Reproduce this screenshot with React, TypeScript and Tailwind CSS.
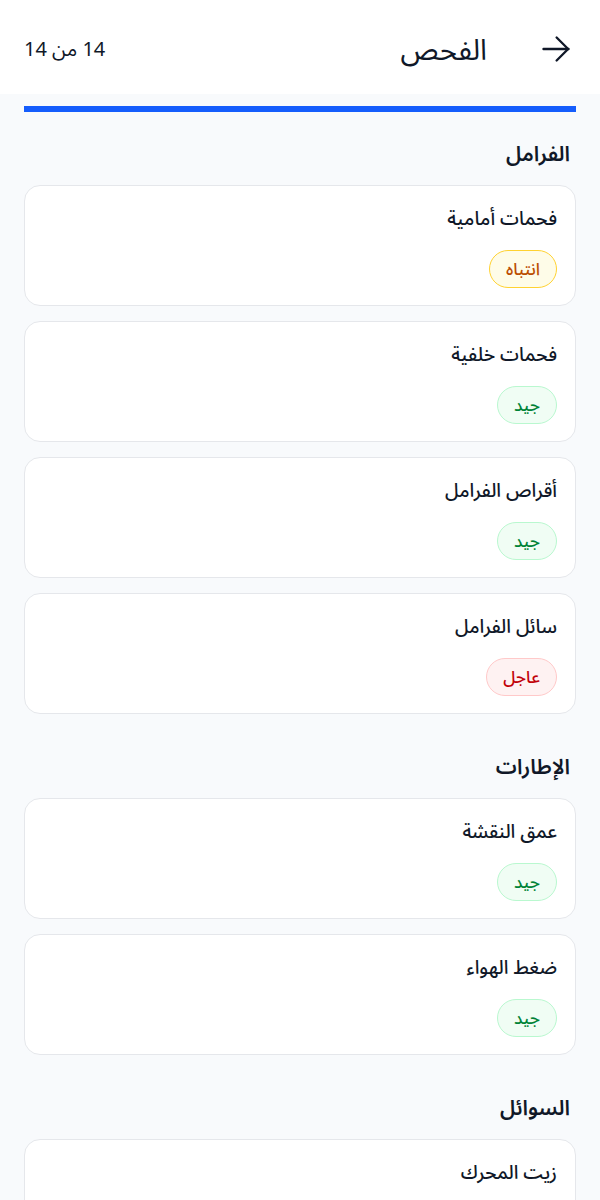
import React from 'react';

type Status = 'good' | 'warn' | 'urgent';

interface Item {
    name: string;
    status: Status;
}

interface Section {
    title: string;
    items: Item[];
}

const sections: Section[] = [
    {
        title: 'الفرامل',
        items: [
            { name: 'فحمات أمامية', status: 'warn' },
            { name: 'فحمات خلفية', status: 'good' },
            { name: 'أقراص الفرامل', status: 'good' },
            { name: 'سائل الفرامل', status: 'urgent' },
        ],
    },
    {
        title: 'الإطارات',
        items: [
            { name: 'عمق النقشة', status: 'good' },
            { name: 'ضغط الهواء', status: 'good' },
        ],
    },
    {
        title: 'السوائل',
        items: [
            { name: 'زيت المحرك', status: 'good' },
            { name: 'سائل التبريد', status: 'good' },
        ],
    },
];

const badgeStyles: Record<Status, string> = {
    good: 'bg-green-50 border-green-200 text-green-700',
    warn: 'bg-yellow-50 border-amber-300 text-amber-700',
    urgent: 'bg-red-50 border-red-200 text-red-700',
};

const badgeLabels: Record<Status, string> = {
    good: 'جيد',
    warn: 'انتباه',
    urgent: 'عاجل',
};

const StatusBadge: React.FC<{ status: Status }> = ({ status }) => (
    <span className={`inline-flex items-center h-[38px] px-4 rounded-full border text-[17px] font-medium ${badgeStyles[status]}`}>
        {badgeLabels[status]}
    </span>
);

const App: React.FC = () => {
    return (
        <div
            dir="rtl"
            className="min-h-screen bg-[#f8fafc] text-gray-900"
            style={{ fontFamily: '"Noto Sans", "Noto Sans Arabic", "DejaVu Sans", sans-serif' }}
        >
            <header className="h-[94px] bg-white flex items-center justify-between pr-[29px] pl-6 pt-1">
                <div className="flex items-center gap-[54px]">
                    <button className="w-[30px] h-[30px] flex items-center justify-center text-gray-900">
                        <svg xmlns="http://www.w3.org/2000/svg" className="w-[30px] h-[30px]" viewBox="0 0 24 24" fill="none" stroke="currentColor" strokeWidth="1.9" strokeLinecap="round" strokeLinejoin="round">
                            <path d="M2 12h20" />
                            <path d="m12.5 2.8 9.2 9.2-9.2 9.2" />
                        </svg>
                    </button>
                    <h1 className="text-[29px] font-normal leading-9">الفحص</h1>
                </div>
                <span className="text-[20px] text-gray-900">14 من 14</span>
            </header>

            <div className="px-6 pt-3">
                <div className="h-1.5 bg-blue-100">
                    <div className="h-full bg-blue-600" style={{ width: `${(14 / 14) * 100}%` }} />
                </div>
            </div>

            <main className="px-6 pt-[27px] pb-10 space-y-[38px]">
                {sections.map((section) => (
                    <section key={section.title}>
                        <h2 className="text-[21px] font-semibold leading-7 pr-1.5 mb-[18px]">{section.title}</h2>
                        <div className="space-y-[15px]">
                            {section.items.map((item) => (
                                <div key={item.name} className="bg-white border border-gray-200 rounded-2xl px-[18px] py-[17px]">
                                    <p className="text-[19px] font-medium leading-[30px]">{item.name}</p>
                                    <div className="mt-[17px]">
                                        <StatusBadge status={item.status} />
                                    </div>
                                </div>
                            ))}
                        </div>
                    </section>
                ))}
            </main>
        </div>
    );
};

export default App;
